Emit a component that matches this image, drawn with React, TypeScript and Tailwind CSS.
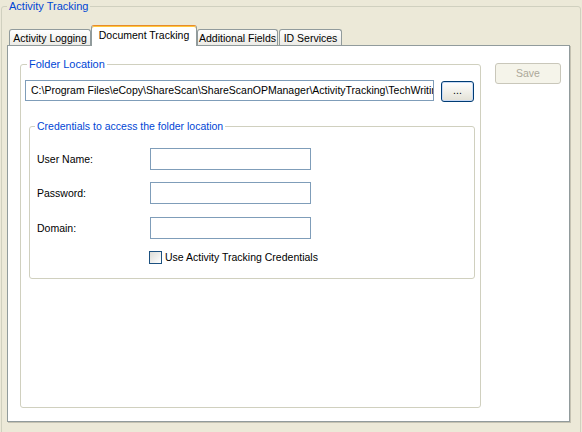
import React from "react";

const tabs = [
  { label: "Activity Logging", w: "w-[82px] ml-[2px]" },
  { label: "Document Tracking", w: "w-[106px]", active: true },
  { label: "Additional Fields", w: "w-[81px]" },
  { label: "ID Services", w: "w-[63px] ml-[1px]" },
];

function TextBox({ value, className }: { value?: string; className: string }) {
  return (
    <div
      className={`flex items-center overflow-hidden whitespace-nowrap border border-[#7F9DB9] bg-white pl-[5px] ${className}`}
    >
      {value}
    </div>
  );
}

function Field({ label, className }: { label: string; className: string }) {
  return (
    <div className={`flex items-center ${className}`}>
      <span className="w-[120px] pl-[7px]">{label}</span>
      <TextBox className="h-[22px] w-[161px]" />
    </div>
  );
}

export default function App() {
  return (
    <div className="h-[432px] w-[582px] overflow-hidden bg-[#ECE9D8] font-['Liberation_Sans',Arial,sans-serif] text-[10.5px] leading-[13px] text-black">
      <fieldset className="ml-[1px] h-[440px] w-[580px] rounded-[3px] border border-[#D0D0BF]">
        <legend className="ml-[5px] px-[2px] text-[11px] text-[#0046D5]">Activity Tracking</legend>

        {/* Tab strip */}
        <div className="relative z-10 mt-[12px] ml-[5px] -mb-px flex h-[21px] items-start whitespace-nowrap">
          {tabs.map((t) =>
            t.active ? (
              <div
                key={t.label}
                className={`${t.w} flex h-[21px] items-center justify-center rounded-t-[3px] border border-b-0 border-[#919B9C] border-t-[#E68B2C] bg-white pb-[1px] shadow-[inset_0_1px_0_#FFC73C]`}
              >
                {t.label}
              </div>
            ) : (
              <div
                key={t.label}
                className={`${t.w} mt-[4px] flex h-[16px] items-center justify-center rounded-t-[3px] border border-b-0 border-[#919B9C] bg-gradient-to-b from-white to-[#ECEBE6] pt-[1px]`}
              >
                {t.label}
              </div>
            )
          )}
        </div>

        {/* Tab page */}
        <div className="ml-[5px] flex h-[377px] w-[563px] items-start border border-[#919B9C] bg-white shadow-[1px_1px_0_#C5C2B2]">
          <fieldset className="mt-[12px] ml-[12px] h-[350px] w-[461px] rounded-[3px] border border-[#D0D0BF]">
            <legend className="ml-[6px] px-[2px] text-[11px] text-[#0046D5]">Folder Location</legend>

            <div className="mt-[9px] flex items-start">
              <TextBox
                className="ml-[4px] h-[21px] w-[409px] pl-[5px]"
                value="C:\Program Files\eCopy\ShareScan\ShareScanOPManager\ActivityTracking\TechWriting"
              />
              <button className="mt-px ml-[7px] flex h-[21px] w-[33px] items-center justify-center rounded-[3px] border border-[#003C74] bg-gradient-to-b from-white to-[#E3E1D6] pb-[3px] shadow-[inset_0_0_0_1px_#C9DAF5]">
                ...
              </button>
            </div>

            <fieldset className="mt-[18px] ml-[8px] h-[159px] w-[446px] rounded-[3px] border border-[#D0D0BF]">
              <legend className="ml-[5px] px-[2px] text-[#0046D5]">
                Credentials to access the folder location
              </legend>
              <Field label="User Name:" className="mt-[15px]" />
              <Field label="Password:" className="mt-[12px]" />
              <Field label="Domain:" className="mt-[13px]" />
              <div className="mt-[12px] ml-[119px] flex items-center">
                <span className="h-[13px] w-[13px] border border-[#1C5180] bg-gradient-to-br from-[#DCDCD7] to-white" />
                <span className="ml-[3px]">Use Activity Tracking Credentials</span>
              </div>
            </fieldset>
          </fieldset>

          <button
            disabled
            className="mt-[17px] ml-[14px] flex h-[21px] w-[66px] items-center justify-center rounded-[3px] border border-[#C9C7BA] bg-[#F5F4EA] text-[#ACA899]"
          >
            Save
          </button>
        </div>
      </fieldset>
    </div>
  );
}
